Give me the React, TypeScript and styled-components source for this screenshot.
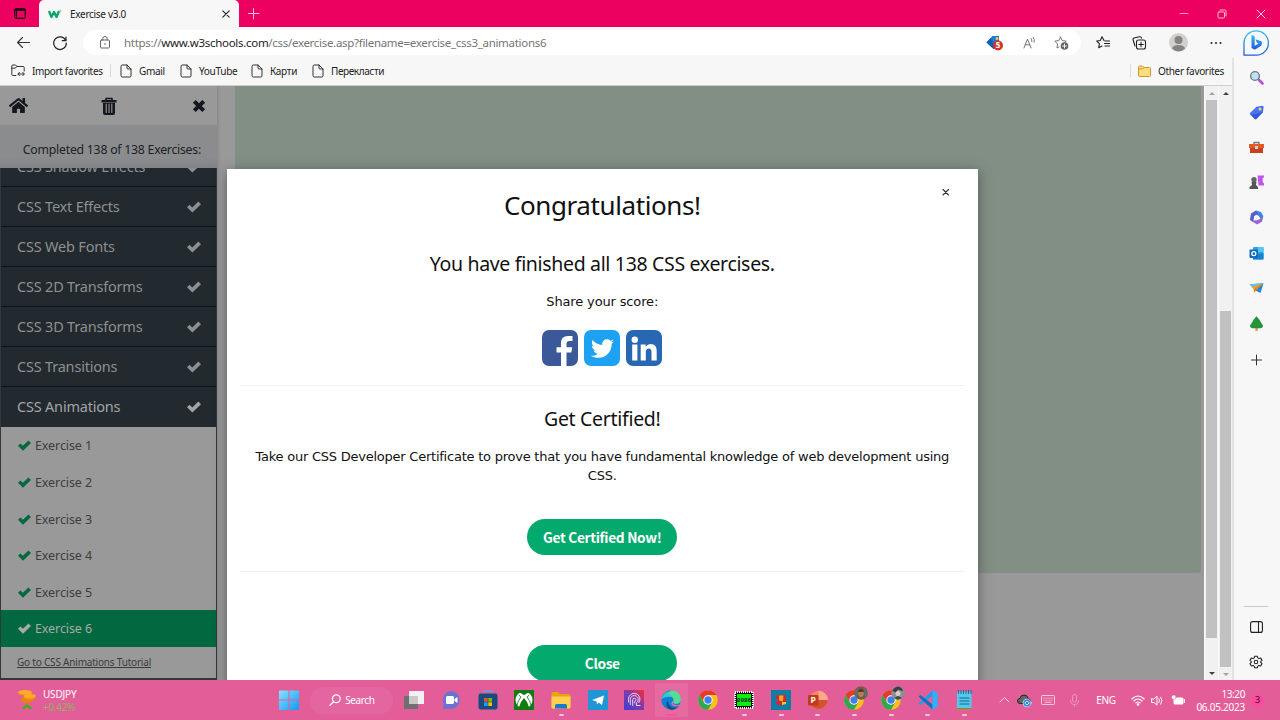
import React from 'react';
import styled, { createGlobalStyle, css } from 'styled-components';
import { FaHome, FaTwitter } from 'react-icons/fa';

const Global = createGlobalStyle`
  * { box-sizing: border-box; }
  body { margin: 0; overflow: hidden; font-family: "Noto Sans", "Open Sans", sans-serif; }
  svg { display: block; flex: none; overflow: visible; }
`;

/* ---------- shared ---------- */
const Text = styled.span<{ $size: number; $ls?: number; $color?: string; $w?: number }>`
  font-size: ${p => p.$size}px;
  letter-spacing: ${p => p.$ls ?? 0}px;
  color: ${p => p.$color ?? '#222'};
  font-weight: ${p => p.$w ?? 400};
  white-space: nowrap;
  line-height: 1.2;
`;

const Svg = ({ w, h = w, box, children }: { w: number; h?: number; box?: string; children: React.ReactNode }) => (
  <svg width={w} height={h} viewBox={box ?? `0 0 ${w} ${h}`} fill="none" strokeLinecap="round" strokeLinejoin="round">
    {children}
  </svg>
);

const Check = ({ size }: { size: number }) => (
  <Svg w={size} h={size} box="0 0 14 14">
    <path d="M0 7.300 2.500 4.800 5.300 7.400 11.300 1.600 14 4.200 5.400 12.600Z" fill="currentColor" />
  </Svg>
);

const Screen = styled.div`
  width: 1280px;
  height: 720px;
  display: flex;
  flex-direction: column;
  overflow: hidden;
  background: #f7f7f7;
`;

/* ---------- title bar ---------- */
const TitleBar = styled.header`
  height: 27px;
  flex: none;
  display: flex;
  align-items: center;
  background: #ec0060;
`;
const TabActions = styled.div`
  width: 39px;
  display: flex;
  justify-content: center;
  padding-left: 1px;
`;
const Tab = styled.div`
  width: 200px;
  height: 27px;
  padding: 0 9px 0 10px;
  display: flex;
  align-items: center;
  background: #f7f7f7;
  border-radius: 5px 5px 0 0;
`;
const TabTitle = styled(Text)`
  flex: 1;
  margin-left: 7px;
`;
const NewTab = styled.div`
  margin-left: 9px;
`;
const Controls = styled.div`
  margin-left: auto;
  width: 115px;
  display: flex;
  justify-content: space-around;
  align-items: center;
`;

/* ---------- toolbar ---------- */
const Toolbar = styled.div`
  height: 31px;
  flex: none;
  display: flex;
  align-items: center;
  padding-left: 16px;
`;
const Reload = styled.div`
  margin: 0 16px 0 23px;
`;
const Address = styled.div`
  width: 998px;
  height: 25px;
  display: flex;
  align-items: center;
  padding: 0 11px 0 16px;
  background: #fff;
  border-radius: 13px;
`;
const Url = styled(Text)`
  flex: 1;
  margin-left: 13px;
  b { font-weight: 400; color: #1b1b1b; }
`;
const AddressIcons = styled.div`
  display: flex;
  align-items: center;
  gap: 18px;
`;
const ToolbarIcons = styled.div`
  flex: 1;
  display: flex;
  align-items: center;
  padding-left: 15px;
  gap: 22.3px;
`;

/* ---------- body ---------- */
const Body = styled.div`
  height: 622px;
  flex: none;
  display: flex;
`;
const Main = styled.main`
  width: 1232px;
  display: flex;
  flex-direction: column;
`;
const Favorites = styled.nav`
  height: 28px;
  flex: none;
  display: flex;
  align-items: center;
  padding: 0 8px 2px 11px;
  border-bottom: 1px solid #cfcfcf;
`;
const Favorite = styled.div<{ $width: number }>`
  width: ${p => p.$width}px;
  display: flex;
  align-items: center;
  gap: 7px;
`;
const Rule = styled.i<{ $left: number; $right: number }>`
  width: 1px;
  height: 13px;
  margin: 0 ${p => p.$right}px 0 ${p => p.$left}px;
  background: #d9d9d9;
`;

const WebView = styled.section`
  position: relative;
  flex: 1;
  min-height: 0;
  display: flex;
  overflow: hidden;
  background: #999;
`;
const Menu = styled.aside`
  width: 217px;
  flex: none;
  display: flex;
  flex-direction: column;
  box-shadow: 1px 0 3px rgba(0, 0, 0, 0.15);
`;
const MenuTools = styled.div`
  height: 39px;
  flex: none;
  display: flex;
  align-items: center;
  justify-content: space-between;
  padding: 0 11px 0 9px;
  color: #14171d;
`;
const Progress = styled.div`
  height: 43px;
  flex: none;
  display: flex;
  justify-content: flex-end;
  padding: 18px 16px 0 0;
  background: linear-gradient(#8b8c8e 75%, #818387);
`;
const Lessons = styled.div`
  display: flex;
  flex-direction: column;
  flex: 1;
  min-height: 0;
  overflow: hidden;
  justify-content: flex-end;
  border: solid #31393c;
  border-width: 0 1px 2px 1px;
`;
const Lesson = styled.div<{ $open?: boolean }>`
  height: 40px;
  flex: none;
  display: flex;
  align-items: center;
  justify-content: space-between;
  padding: 0 15px 0 16px;
  background: #22292f;
  border-bottom: ${p => (p.$open ? 0 : 1)}px solid #101417;
  color: ${p => (p.$open ? '#a3a5a6' : '#8d9091')};
`;
const Exercise = styled.div<{ $active?: boolean }>`
  height: 36.6px;
  flex: none;
  display: flex;
  align-items: center;
  gap: 4px;
  padding: 1px 0 0 17px;
  color: #02683f;
  background: #999;
  ${p => p.$active && css`
    background: #02683f;
    color: #a9aaa9;
  `}
`;
const Tutorial = styled.div`
  height: 31.4px;
  flex: none;
  padding: 7px 0 0 16px;
  background: #999;
  line-height: 12px;
  span { text-decoration: underline; }
`;

const Content = styled.div`
  flex: 1;
  padding: 0 3.5px 0 18px;
`;
const CodeArea = styled.div`
  height: 487px;
  background: #828f85;
  border-radius: 0 0 3px 3px;
`;

const ScrollTrack = styled.div`
  width: 14px;
  flex: none;
  display: flex;
  flex-direction: column;
  align-items: center;
  background: #f1f1f1;
  border-left: 1px solid #fafafa;
`;
const Arrow = styled.i<{ $down?: boolean; $dim?: boolean }>`
  height: 14px;
  flex: none;
  display: flex;
  align-items: center;
  padding-top: 1px;
  &::before {
    content: '';
    border: 3px solid transparent;
    ${p => (p.$down ? 'border-bottom-width: 0; border-top-color' : 'border-top-width: 0; border-bottom-color')}: ${p => (p.$dim ? '#a3a3a3' : '#404040')};
  }
`;
const Track = styled.div<{ $offset: number }>`
  flex: 1;
  padding-top: ${p => p.$offset}px;
`;
const Thumb = styled.div<{ $height: number }>`
  width: 11px;
  height: ${p => p.$height}px;
  background: #c1c1c1;
`;

/* ---------- dialog ---------- */
const Dialog = styled.div`
  position: absolute;
  left: 227px;
  top: 83px;
  width: 750.5px;
  height: 560px;
  padding: 0 13px;
  background: #fff;
  display: flex;
  flex-direction: column;
  align-items: center;
  box-shadow: 0 3px 8px rgba(0, 0, 0, 0.2), 0 2px 15px rgba(0, 0, 0, 0.22);
`;
const CloseX = styled.div`
  position: absolute;
  left: 714px;
  top: 19px;
`;
const Line = styled(Text)<{ $h: number; $top: number; $verdana?: boolean }>`
  height: ${p => p.$h}px;
  line-height: ${p => p.$h}px;
  margin-top: ${p => p.$top}px;
  color: #111;
  ${p => p.$verdana && css`font-family: "DejaVu Sans", sans-serif;`}
`;
const Share = styled.div`
  display: flex;
  gap: 6px;
  margin-top: 18px;
`;
const ShareButton = styled.div<{ $bg: string }>`
  width: 36px;
  height: 36px;
  display: flex;
  align-items: center;
  justify-content: center;
  border-radius: 7px;
  background: ${p => p.$bg};
  color: #fff;
`;
const Divider = styled.div<{ $top: number }>`
  width: 724px;
  height: 1px;
  flex: none;
  margin-top: ${p => p.$top}px;
  background: #f0f0f0;
`;
const Pill = styled.div<{ $top: number }>`
  width: 150px;
  height: 36px;
  flex: none;
  margin-top: ${p => p.$top}px;
  display: flex;
  align-items: center;
  justify-content: center;
  border-radius: 18px;
  background: #04aa6d;
  color: #fff;
  letter-spacing: -0.3px;
  font: 700 13.7px/36px "Noto Sans CJK SC", sans-serif;
`;

/* ---------- edge sidebar ---------- */
const Side = styled.aside`
  width: 48px;
  display: flex;
  flex-direction: column;
  align-items: center;
  padding: 2px 1.5px 0 0;
  border-left: 2px solid #e3e3e3;
  background: #f7f7f7;
`;
const SideSlot = styled.div`
  height: 35.1px;
  flex: none;
  display: flex;
  align-items: center;
`;
const SideRule = styled.div`
  width: 24px;
  height: 1px;
  margin: auto 0 3px;
  background: #c9c9c9;
`;

/* ---------- taskbar ---------- */
const Taskbar = styled.footer`
  height: 40px;
  flex: none;
  display: flex;
  align-items: center;
  background: #e35e99;
`;
const Widget = styled.div`
  width: 270.5px;
  display: flex;
  align-items: center;
  padding-left: 17px;
  gap: 7px;
`;
const Stack = styled.div<{ $end?: boolean }>`
  display: flex;
  flex-direction: column;
  align-items: ${p => (p.$end ? 'flex-end' : 'flex-start')};
  gap: 1px;
`;
const AppButton = styled.div<{ $running?: boolean; $active?: boolean }>`
  width: 36.67px;
  height: 40px;
  flex: none;
  display: flex;
  flex-direction: column;
  align-items: center;
  padding-top: 10px;
  gap: 4px;
  ${p => p.$active && css`
    background: linear-gradient(#e56aa0, #e56aa0) center / 33px 34px no-repeat;
  `}
  &::after {
    content: '';
    width: ${p => (p.$active ? 12 : 5)}px;
    height: 2px;
    border-radius: 1px;
    background: ${p => (p.$active ? '#ff4f9e' : p.$running ? '#f4c6da' : 'transparent')};
  }
`;
const SearchBox = styled.div`
  width: 83px;
  height: 27px;
  margin: 0 3px;
  display: flex;
  align-items: center;
  padding-left: 19px;
  gap: 4px;
  border-radius: 14px;
  background: #e466a0;
`;
const Tray = styled.div`
  margin-left: auto;
  padding-right: 16px;
  display: flex;
  align-items: center;
`;
const TrayItem = styled.div<{ $width: number; $end?: boolean }>`
  width: ${p => p.$width}px;
  display: flex;
  align-items: center;
  justify-content: ${p => (p.$end ? 'flex-end' : 'center')};
`;
const Notice = styled.div`
  width: 13px;
  height: 13px;
  margin-left: 6px;
  display: flex;
  align-items: center;
  justify-content: center;
  border-radius: 50%;
  background: #ff4aa0;
`;

const PageIcon = () => (
  <Svg w={12} h={14}>
    <path d="M1 2.2Q1 1 2.2 1H7L11 5v6.8Q11 13 9.800 13H2.200Q1 13 1 11.800ZM7 1v3Q7 5 8 5h3" stroke="#333" />
  </Svg>
);

const Chrome = () => (
  <>
    <circle cx="10" cy="10" r="9.800" fill="#fbc116" />
    <path d="M1.500 5.100A9.800 9.800 0 0 1 18.500 5.100H10L5.800 12.400Z" fill="#e33b2e" />
    <path d="M1.500 5.100A9.800 9.800 0 0 0 10 19.800L14.200 12.400 5.800 12.400Z" fill="#2da94f" />
    <circle cx="10" cy="10" r="4.700" fill="#fff" />
    <circle cx="10" cy="10" r="3.700" fill="#3f80ea" />
  </>
);

const lessons = ['CSS Shadow Effects', 'CSS Text Effects', 'CSS Web Fonts', 'CSS 2D Transforms', 'CSS 3D Transforms', 'CSS Transitions', 'CSS Animations'];

const sideIcons: React.ReactNode[] = [
  <><path d="m10 10 3.500 3.500" stroke="#b54be0" strokeWidth="2.600" /><circle cx="6" cy="6" r="4.400" fill="#b9e2f5" stroke="#75797d" strokeWidth="1.400" /></>,
  <><path d="M1 8 7.500 1.800 13.500.800Q14.600.800 14.600 2L14 7.200 7.300 14Q6.600 14.600 5.900 14L1 9.300Q.400 8.700 1 8Z" fill="#4775f5" /><path d="m2 10 5-1 7-2-6.700 7q-.700.600-1.400 0Z" fill="#3a55d8" /><circle cx="11" cy="4" r="1.500" fill="#ffd34d" /></>,
  <><path d="M5 4V2.500h5V4" stroke="#777" strokeWidth="1.400" /><path d="M1 4h13v9H1Z" fill="#c9401a" /><path d="M0 4h15v4H0Z" fill="#e25a28" /><path d="M6 6h3v3H6Z" fill="#ccd2d4" /></>,
  <><path d="M8.500.500h6.500v1.800l-1.300.700v4l1.300 1.500v2H9.500Z" fill="#bf55ef" /><circle cx="5" cy="4.700" r="2.700" fill="#666" /><path d="M2.500 7h5L7 10l2 2v2H.500v-2L3 10Z" fill="#555" /></>,
  <><path d="M7 .600 12 2l2.300 4-1.500 4.500L10 6.500 5 4Z" fill="#3d86e0" /><path d="M7 .600 2 3.500.900 10l3.500 2L5 6.500l4-2Z" fill="#5b5fcb" /><path d="M2.500 11 8 14.500l5-2.700L14.300 6.500 10 9.500Z" fill="#9b67d5" /><path d="M7.500 4.800 10 6.200v2.900L7.500 10.500 5 9.100V6.200Z" fill="#f7f7f7" /></>,
  <><rect x="4" y="1" width="10.500" height="12.500" rx="1" fill="#2ba5e8" /><path d="M9 1h5.500v5H9Z" fill="#55c3f3" /><path d="m4 9 10.500-2v6.500H4Z" fill="#1683cf" /><rect x=".500" y="3.500" width="8.500" height="8.500" rx="1" fill="#0f6cbd" /><circle cx="4.800" cy="7.700" r="2" stroke="#fff" strokeWidth="1.300" /></>,
  <><path d="M.500 3.200 14.500 2.200 11.500 12 7.500 10Z" fill="#2489dc" /><path d="m.500 3.200 14-1L4.500 7Z" fill="#5cc4f5" /><path d="M2.500 6 14.500 2.200 5.500 8.700Z" fill="#f3a128" /><path d="M4.500 8 14.500 2.200 7 9.500 5.200 11.800Z" fill="#e08a1c" /></>,
  <><path d="M6.400 11h2.400v3.800H6.400Z" fill="#f2912c" /><path d="M7.500.300Q11 4 12 6.500L14 9.500Q14 12.300 11 12.300H4Q1 12.300 1 9.500L3 6.500Q4 4 7.500.300Z" fill="#279339" /></>,
  <path d="M2.500 9h10M7.500 4v10" stroke="#333" />,
];

const dockIcons: { running?: boolean; active?: boolean; art: React.ReactNode }[] = [
  { art: <><rect x="0" y="6" width="14" height="13" fill="#6f6f6f" /><rect x="5" y="1" width="15" height="13" fill="#f2f2f2" /><path d="M5 6h9v8H5Z" fill="#c9c9c9" /></> },
  { art: <><path d="M10.500 1A9 9 0 1 1 8 18.800L1.500 19 3 14.500A9 9 0 0 1 10.500 1Z" fill="#6a72d2" /><rect x="5" y="6" width="8" height="8" rx="1.500" fill="#fff" /><path d="m13.500 9 3-2v6l-3-2Z" fill="#fff" /></> },
  { art: <><path d="M6 4V1h8v3" stroke="#38b6ea" /><rect x=".500" y="3.500" width="19" height="16" rx="2" fill="#1b4b7e" /><path d="M6 8h3.700v3.700H6Z" fill="#f05023" /><path d="M10.300 8H14v3.700h-3.700Z" fill="#80bb03" /><path d="M6 12.300h3.700V16H6Z" fill="#05a6f0" /><path d="M10.300 12.300H14V16h-3.700Z" fill="#ffb902" /></> },
  { art: <><rect width="20" height="20" rx=".5" fill="#107c10" /><circle cx="10" cy="10" r="8.500" fill="#fff" /><path d="M4.600 2.600Q7 2.800 10 5.200 13 2.800 15.400 2.600L13.500.5h-7Z" fill="#107c10" /><path d="M10 8Q14 12 15.200 17.500L10 19.500 4.800 17.500Q6 12 10 8Z" fill="#107c10" /><path d="M3 15Q4 10.500 7 7L5 5.200M17 15Q16 10.500 13 7L15 5.200" stroke="#107c10" strokeWidth=".8" /></> },
  { running: true, art: <><path d="M.500 3.500q0-1.500 1.500-1.500h5l2 2h9q1.500 0 1.500 1.500V17q0 1.500-1.500 1.500H2Q.500 18.500.500 17Z" fill="#e8a30e" /><path d="M.500 6.500h19V17q0 1.500-1.500 1.500H2Q.500 18.500.500 17Z" fill="#ffd04f" /><path d="M4 18.500v-3q0-1.500 1.500-1.500h9q1.500 0 1.500 1.500v3Z" fill="#1b78d0" /></> },
  { art: <><rect width="20" height="20" fill="#2196d6" /><path d="m4 10 12-4.500L14 15l-3.500-2.500L9 14.500l-.500-3Z" fill="#fff" /></> },
  { art: <><defs><linearGradient id="pr" x1="0" y1="1" x2="1" y2="0"><stop offset="0" stopColor="#3b3fd0" /><stop offset=".500" stopColor="#7b3bb0" /><stop offset="1" stopColor="#ff2a2a" /></linearGradient></defs><rect width="20" height="20" fill="url(#pr)" /><path d="M8.700 15.500V9.700a1.600 1.600 0 1 1 2 1.600v1.500M6.300 14.500V9.500a4 4 0 1 1 6 3.500v2.500H16M4.500 12V9.500a5.800 5.800 0 1 1 10.500 3" stroke="#e6d4fa" strokeWidth="1" /></> },
  { active: true, art: <><circle cx="10" cy="10" r="9.700" fill="#1180d3" /><path d="M.500 9.500A9.700 9.700 0 0 1 19.700 9q.300 4.500-4.700 4.800-3.500-.300-2.500-2.300Q13 7 8.500 6.800 3 6.700.500 9.500Z" fill="#35c5d5" /><path d="M10 .300q9.700.700 9.700 9.200 0 4-4.700 4.300-3-.300-2.500-2.300Q14 6 7 4Z" fill="#56dd91" /><path d="M7 10q-.500 5 4 7.500 4 1 7-2-3 5-9 4-6-3-2-9.500Z" fill="#114a8b" /><path d="M12.500 11.500Q11 13 13 14.500q3 1.500 6 0l-1 1.200q-5 2-7.500-1.200-.500-2 1-3.500Z" fill="#e56aa0" /></> },
  { art: <Chrome /> },
  { running: true, art: <><rect x="1" y="2" width="18" height="16" fill="#0d0d0d" stroke="#fff" strokeWidth="2" strokeDasharray="1 1" strokeLinecap="butt" /><rect x="3" y="4" width="14" height="12" fill="#0cef0c" /><text x="10" y="12.300" fontSize="6" fontWeight="700" fontFamily="Liberation Mono" fill="#022" textAnchor="middle">8086</text></> },
  { running: true, art: <><rect width="20" height="20" fill="#0d7fa5" /><path d="M5 5.500 11 4.500l4 1v8l-5 2-5-1.500Z" fill="#d6262b" /><path d="M8 5.500h4.500l-.5 6-4-1Z" fill="#f6a822" /><path d="M11 12h4v2l-4 1Z" fill="#f0c62a" /><path d="M4.500 9h2.500v3H4.500Z" fill="#6750c0" /></> },
  { running: true, art: <><circle cx="10.500" cy="10" r="9.300" fill="#ee8762" /><path d="M10.500 10h9.300a9.300 9.300 0 0 1-18 3Z" fill="#d35230" /><path d="M10.500.700a9.300 9.300 0 0 1 9.300 9.300h-9.300Z" fill="#ffa98b" /><rect x="0" y="5" width="10.500" height="10.500" rx="1" fill="#c13b1b" /><text x="5.200" y="13.300" fontSize="8.500" fontWeight="700" fontFamily="Open Sans" fill="#fff" textAnchor="middle">P</text></> },
  { running: true, art: <><Chrome /><circle cx="17" cy="3" r="6.800" fill="#7b5a44" /><path d="M11.500 6q-1-6 2.500-8l-1 9ZM22.500 6q1-6-2.500-8l1 9Z" fill="#4e7a74" /><ellipse cx="17" cy="3" rx="2.800" ry="4" fill="#b0805c" /><path d="M14 1q3-5 6 0l-.5 1h-5Z" fill="#5a3a28" /></> },
  { running: true, art: <><Chrome /><circle cx="17" cy="3" r="6.800" fill="#8b8f96" /><path d="M11.500 1q1-4 6-4.500 4 1 4.500 4.500l-2-.5-3-1-2 3Z" fill="#3c3d44" /><circle cx="17" cy="3.500" r="2.500" fill="#dccdc4" /><path d="m13 8 4-2 4 2-4 1.700Z" fill="#444750" /></> },
  { running: true, art: <><path d="M14.500.500 19.500 3v14l-5 2.500V5.500L2.500 15 .500 13.500Z" fill="#1f9cf0" /><path d="M.500 6.500 2.500 5l12 9.500v5Z" fill="#0b71c1" /><path d="M14.500.500 19.500 3v14l-5 2.500Z" fill="#35aef5" /></> },
  { running: true, art: <><rect x="3" y="1.500" width="14.500" height="18" rx="1" fill="#54c8e8" /><path d="M3 18h14.500v1.500H3Z" fill="#b07a22" /><path d="M4.500.500v3M7 .500v3M9.500.500v3M12 .500v3M14.500.500v3M17 .500v3" stroke="#14679c" /><path d="M6 8h9M6 11h9M6 14h9" stroke="#12688f" strokeWidth="1.200" /></> },
];

export default function App() {
  return (
    <Screen>
      <Global />
      <TitleBar>
        <TabActions>
          <Svg w={12} h={11}><rect x=".7" y=".7" width="10.600" height="9.600" rx="1.500" stroke="#2a0716" strokeWidth="1.300" /><path d="M1 2h10" stroke="#2a0716" strokeWidth="2" /><path d="M2.500 3v7" stroke="#2a0716" strokeWidth="1.200" /></Svg>
        </TabActions>
        <Tab>
          <Svg w={14} h={10}><path d="m0 2 2.500 6L5 3l2.500 5L10 2" stroke="#04a56b" strokeWidth="2.300" strokeLinecap="butt" /><path d="M10.800 1h1.300l-.8 1 .8 1h-1.200" stroke="#7cc9a8" strokeWidth=".7" /></Svg>
          <TabTitle $size={10} $ls={-0.3}>Exercise v3.0</TabTitle>
          <Svg w={8}><path d="m.8.8 6.400 6.400M7.200.8.8 7.200" stroke="#222" strokeWidth="1.100" /></Svg>
        </Tab>
        <NewTab><Svg w={12}><path d="M.500 5.500h10.500M5.500 .500v10.500" stroke="#ffc2dc" /></Svg></NewTab>
        <Controls>
          <Svg w={10}><path d="M1 4.500h8" stroke="#ff9ac4" /></Svg>
          <Svg w={10}><rect x="1" y="3" width="6.500" height="6" rx="1" stroke="#ffb5d3" /><path d="M3 1h5q1 0 1 1v5" stroke="#ffb5d3" /></Svg>
          <Svg w={10}><path d="m1 1 8 8M9 1 1 9" stroke="#ffd0e3" /></Svg>
        </Controls>
      </TitleBar>

      <Toolbar>
        <Svg w={14} h={12}><path d="M13.5 5.500H1.500M6.500 .5 1.500 5.500l5 5" stroke="#333" strokeWidth="1.100" /></Svg>
        <Reload><Svg w={14}><path d="M12.700 4.500A6.300 6.300 0 1 0 13.300 7M13 1v3.700H9.300" stroke="#222" strokeWidth="1.200" /></Svg></Reload>
        <Address>
          <Svg w={12} h={13}><rect x="1.500" y="4" width="9" height="8" rx="1" stroke="#666" /><path d="M3.800 4V2.500Q3.800.5 6 .5t2.200 2v1.500" stroke="#666" /><circle cx="6" cy="8" r=".8" fill="#666" /></Svg>
          <Url $size={11.5} $ls={-0.3} $color="#757575">https://<b>www.w3schools.com</b>/css/exercise.asp?filename=exercise_css3_animations6</Url>
          <AddressIcons>
            <Svg w={17} h={16}><path d="m.500 7.500 6-6.500H13v8L7.500 14Z" fill="#1a7bd0" /><path d="m.500 7.500 4-4.500 5 9-2 2Z" fill="#0f5fb4" /><circle cx="11" cy="3.500" r="1.500" fill="#ffc83d" /><circle cx="12" cy="10.500" r="5" fill="#d93025" /><text x="12" y="13.300" fontSize="8" fontWeight="700" fontFamily="Open Sans" fill="#fff" textAnchor="middle">5</text></Svg>
            <Svg w={15} h={12}><path d="M3 11 6.500 2 10 11M4.300 7.800h4.400M10 1.500q1.300 1.300.8 3M12.200.300q1.800 2.200.9 5" stroke="#777" /></Svg>
            <Svg w={16} h={14}><path d="m6.500 1 1.700 3.600 4 .500-1.500 1.400M5 11l-2 1 .600-4L.800 5.100l4-.500L6.500 1" stroke="#777" /><circle cx="10.500" cy="10" r="3.800" fill="#636363" /><path d="M8.500 10h4M10.500 8v4" stroke="#fff" strokeWidth=".9" /></Svg>
          </AddressIcons>
        </Address>
        <ToolbarIcons>
          <Svg w={14} h={13}><path d="M8 4.500 6 .800 4.300 4.500.700 5l2.700 2.700-.700 4L6 10M9 5h4.500M8.500 7.500h5M9 10h4.500" stroke="#222" strokeWidth="1.100" /></Svg>
          <Svg w={14} h={14}><path d="M3 10 1 3.500Q.800 2.500 2 2L7.500.800Q9 .500 9.500 2" stroke="#222" strokeWidth="1.100" /><rect x="4.500" y="4" width="9" height="9" rx="2" stroke="#222" strokeWidth="1.100" /><path d="M9 6.200v4.600M6.700 8.500h4.600" stroke="#222" strokeWidth="1.100" /></Svg>
          <Svg w={19}><circle cx="9.500" cy="9.500" r="9.500" fill="#d2d0ce" /><circle cx="9.500" cy="7" r="4" fill="#858280" /><path d="M3 15.500Q4 12 9.500 12t6.500 3.500a9 9 0 0 1-13 0Z" fill="#858280" /></Svg>
          <Svg w={12} h={4}><circle cx="1.500" cy="2" r="1" fill="#222" /><circle cx="6" cy="2" r="1" fill="#222" /><circle cx="10.500" cy="2" r="1" fill="#222" /></Svg>
          <Svg w={26}><defs><linearGradient id="bing" x1="0" y1="0" x2="0" y2="1"><stop offset="0" stopColor="#38b9ee" /><stop offset="1" stopColor="#2558d8" /></linearGradient></defs><path d="M0 13A12.200 12.200 0 1 1 12.200 25.200H0Z" fill="#f4faff" stroke="url(#bing)" strokeWidth="1.300" /><path d="m7.500 5 3.200 1.200v9.500l4-2.300-2-1-1.200-3.200 5.700 2q1.500 1.500 0 4.500l-6.500 4-3.200-1.700Z" fill="url(#bing)" /></Svg>
        </ToolbarIcons>
      </Toolbar>

      <Body>
        <Main>
          <Favorites>
            <Favorite $width={98}>
              <Svg w={14} h={13}><path d="M5 11.500H1.800Q.800 11.500.800 10.500V2Q.800 1 1.800 1H4.500L6 2.500h6.200q1 0 1 1V7M.800 4.200H4L6 2.500M7 10h6M8.500 8.300 7 10l1.500 1.700M11.700 8.300 13.300 10l-1.600 1.700" stroke="#333" /></Svg>
              <Text $size={10} $ls={-0.35}>Import favorites</Text>
            </Favorite>
            <Rule $left={1} $right={9} />
            <Favorite $width={60}><PageIcon /><Text $size={10} $ls={-0.3}>Gmail</Text></Favorite>
            <Favorite $width={71}><PageIcon /><Text $size={10} $ls={-0.3}>YouTube</Text></Favorite>
            <Favorite $width={61}><PageIcon /><Text $size={10} $ls={-0.3}>Карти</Text></Favorite>
            <Favorite $width={80}><PageIcon /><Text $size={10} $ls={-0.4}>Перекласти</Text></Favorite>
            <Rule $left={738} $right={7} />
            <Favorite $width={86}>
              <Svg w={13} h={12}><path d="M.500 2Q.500 1 1.500 1h3L6 2.500h5.500q1 0 1 1V10.500q0 1-1 1h-10q-1 0-1-1Z" fill="#ffdc7c" stroke="#c9982c" /><path d="M.500 4H4.500L6 2.500" stroke="#c9982c" /></Svg>
              <Text $size={10} $ls={-0.33}>Other favorites</Text>
            </Favorite>
          </Favorites>

          <WebView>
            <Menu>
              <MenuTools>
                <FaHome size={19} />
                <Svg w={19} h={18}><path d="M5 3V1.500h6V3" stroke="#14171d" strokeWidth="1.600" /><path d="M.500 3h15v2.500H.500ZM2 6h12v10q0 2-2 2H4q-2 0-2-2Z" fill="#14171d" /><path d="M5.200 7v8.500M8 7v8.500M10.800 7v8.500" stroke="#999" strokeWidth="1.100" /></Svg>
                <Svg w={14}><path d="m2.300 2.300 9.400 9.400M11.700 2.300 2.300 11.700" stroke="#14171d" strokeWidth="4" strokeLinecap="butt" /></Svg>
              </MenuTools>
              <Progress><Text $size={12.3} $ls={-0.25} $color="#1c1f24">Completed 138 of 138 Exercises:</Text></Progress>
              <Lessons>
                {lessons.map((l, i) => (
                  <Lesson key={l} $open={i === 6}>
                    <Text $size={14.5} $ls={-0.2} $color="inherit">{l}</Text>
                    <Check size={14} />
                  </Lesson>
                ))}
                {[1, 2, 3, 4, 5, 6].map(n => (
                  <Exercise key={n} $active={n === 6}>
                    <Check size={13} />
                    <Text $size={12.5} $ls={-0.1} $color={n === 6 ? '#a9aaa9' : '#3d3d3d'}>Exercise {n}</Text>
                  </Exercise>
                ))}
                <Tutorial><Text $size={10} $ls={-0.2} $color="#3a3a3a">Go to CSS Animations Tutorial</Text></Tutorial>
              </Lessons>
            </Menu>
            <Content><CodeArea /></Content>
            <ScrollTrack><Arrow $dim /><Track $offset={0}><Thumb $height={538} /></Track><Arrow $down /></ScrollTrack>
            <ScrollTrack><Arrow /><Track $offset={211}><Thumb $height={356} /></Track><Arrow $down $dim /></ScrollTrack>

            <Dialog>
              <CloseX><Svg w={9}><path d="m2 1.500 5.500 5.500M7.500 1.500 2 7" stroke="#333" strokeWidth="1.100" /></Svg></CloseX>
              <Line $size={26} $ls={-0.4} $h={36} $top={18}>Congratulations!</Line>
              <Line $size={19.500} $ls={-0.33} $h={28} $top={27}>You have finished all 138 CSS exercises.</Line>
              <Line $size={13} $ls={-0.15} $h={20} $top={14} $verdana>Share your score:</Line>
              <Share>
                <ShareButton $bg="#3b5998">
                  <Svg w={36}><path d="M19 36V22.500h-4.500v-5.300H19V13q0-7 7-7h4.500v5H27.500q-3 0-3 2.800v3.400h5.700l-.800 5.300h-4.900V36Z" fill="#fff" /></Svg>
                </ShareButton>
                <ShareButton $bg="#1da1f2"><FaTwitter size={23} /></ShareButton>
                <ShareButton $bg="#2867b2">
                  <Svg w={36}><circle cx="8.800" cy="9.800" r="3.200" fill="#fff" /><path d="M6.200 14.500h5.200V30.500H6.200ZM14.700 14.500h5v2.200q1.600-2.600 5-2.600 6 0 6 7v9.400h-5.200V22q0-3.600-2.700-3.600-3 0-3 3.800v8.300h-5.100Z" fill="#fff" /></Svg>
                </ShareButton>
              </Share>
              <Divider $top={19} />
              <Line $size={19.500} $ls={-0.3} $h={28} $top={19}>Get Certified!</Line>
              <Line $size={13} $ls={-0.235} $h={19} $top={14} $verdana>Take our CSS Developer Certificate to prove that you have fundamental knowledge of web development using</Line>
              <Line $size={13} $ls={-0.2} $h={19} $top={0} $verdana>CSS.</Line>
              <Pill $top={33.5}>Get Certified Now!</Pill>
              <Divider $top={16.5} />
              <Pill $top={72.5}>Close</Pill>
            </Dialog>
          </WebView>
        </Main>

        <Side>
          {sideIcons.map((art, i) => <SideSlot key={i}><Svg w={15}>{art}</Svg></SideSlot>)}
          <SideRule />
          <SideSlot><Svg w={13} h={12}><rect x=".6" y=".6" width="11.800" height="10.800" rx="2" stroke="#222" strokeWidth="1.100" /><path d="M8.500 1v10" stroke="#222" strokeWidth="1.100" /></Svg></SideSlot>
          <SideSlot><Svg w={14} box="0 0 24 24"><path d="M9.700 2h4.600l.7 3 2 1.200 3-1 2.300 4L20 11.300v1.500l2.300 2-2.300 4-3-1L15 19l-.7 3H9.700L9 19l-2-1.200-3 1-2.300-4L4 12.700v-1.500l-2.300-2 2.300-4 3 1L9 5Z" stroke="#222" strokeWidth="1.800" /><circle cx="12" cy="12" r="3" stroke="#222" strokeWidth="1.800" /></Svg></SideSlot>
        </Side>
      </Body>

      <Taskbar>
        <Widget>
          <Svg w={19} h={22}><ellipse cx="10" cy="11" rx="6.500" ry="3" fill="#e8820f" /><ellipse cx="8" cy="4" rx="7" ry="3" fill="#e8820f" /><ellipse cx="12.500" cy="8" rx="6" ry="3" fill="#ef8f15" /><ellipse cx="12.800" cy="7" rx="6" ry="2.300" fill="#ffa826" /><ellipse cx="8" cy="3.300" rx="7" ry="2.300" fill="#ffab2b" /><path d="m6.500 19 3.500-2.500 3.500 2.500" stroke="#37b60f" strokeWidth="2.200" /></Svg>
          <Stack>
            <Text $size={10} $ls={-0.2} $color="#fff">USDJPY</Text>
            <Text $size={10} $ls={-0.3} $color="#93b35c">+0.42%</Text>
          </Stack>
        </Widget>
        <AppButton><Svg w={20}><defs><linearGradient id="win" x1="0" y1="0" x2="1" y2="1"><stop offset="0" stopColor="#82e4ff" /><stop offset="1" stopColor="#1597f5" /></linearGradient></defs><path d="M0 .500h9.500v9H0ZM10.500.500H20v9h-9.500ZM0 10.500h9.500v9.500H0ZM10.500 10.500H20V20h-9.500Z" fill="url(#win)" /></Svg></AppButton>
        <SearchBox>
          <Svg w={12}><circle cx="7.300" cy="4.800" r="3.900" stroke="#fff" strokeWidth="1.200" /><path d="M4.500 7.700 1 11.200" stroke="#fff" strokeWidth="1.400" /></Svg>
          <Text $size={10} $ls={-0.4} $color="#fff">Search</Text>
        </SearchBox>
        {dockIcons.map((d, i) => <AppButton key={i} $running={d.running} $active={d.active}><Svg w={20}>{d.art}</Svg></AppButton>)}
        <Tray>
          <TrayItem $width={18}><Svg w={11} h={8}><path d="m1 6 4.500-4.500L10 6" stroke="#fbdbe8" /></Svg></TrayItem>
          <TrayItem $width={22}><Svg w={14} h={13}><path d="M3 9.500Q.500 9.500.500 7T3 4.500Q3.500 1 7 1t4 3.500q2.500.5 2.500 2.500v2.500Z" fill="#666" stroke="#222" /><circle cx="10" cy="9" r="4" fill="#2a7fd6" stroke="#dcebfa" strokeWidth=".7" /><path d="M8 9a2 2 0 0 1 3.500-1M12 9a2 2 0 0 1-3.500 1" stroke="#fff" /></Svg></TrayItem>
          <TrayItem $width={25}><Svg w={14} h={10}><rect x=".5" y=".5" width="13" height="9" rx="1" stroke="#f9cfe0" /><path d="M2.500 3h9M2.500 5h9" stroke="#f9cfe0" strokeDasharray="1 1" strokeLinecap="butt" /><path d="M4 7.300h6" stroke="#f9cfe0" /></Svg></TrayItem>
          <TrayItem $width={28}><Svg w={9} h={13}><rect x="2.500" y=".5" width="4" height="7.500" rx="2" stroke="#ef97bd" /><path d="M.500 6.500q0 4 4 4t4-4M4.500 10.500v2" stroke="#ef97bd" /></Svg></TrayItem>
          <TrayItem $width={36}><Text $size={10} $ls={-0.3} $color="#fff">ENG</Text></TrayItem>
          <TrayItem $width={27}><Svg w={14} h={11}><path d="M.800 4q6.200-6 12.400 0M2.800 6q4.200-4 8.400 0M4.800 8q2.200-2 4.400 0" stroke="#fff" strokeWidth="1.100" /><circle cx="7" cy="9.500" r="1.200" fill="#fff" /></Svg></TrayItem>
          <TrayItem $width={11}><Svg w={12} h={11}><path d="M.600 4v3.500H3l3 2.700V1.200L3 4ZM8 3.800q1.200 1.700 0 3.700M9.800 2.200q2.400 3.300 0 7" stroke="#fff" /></Svg></TrayItem>
          <TrayItem $width={31}><Svg w={14} h={11}><rect x="2.500" y="2.500" width="10" height="7" rx="1.500" fill="#fff" /><path d="M13.500 4.500v3" stroke="#fff" /><circle cx="2.800" cy="2.300" r="2.300" fill="#fff" stroke="#e35e99" strokeWidth=".5" /></Svg></TrayItem>
          <TrayItem $width={52} $end>
            <Stack $end>
              <Text $size={10} $ls={-0.4} $color="#fff">13:20</Text>
              <Text $size={10} $ls={-0.25} $color="#fff">06.05.2023</Text>
            </Stack>
          </TrayItem>
          <Notice><Text $size={9.500} $color="#40142a">3</Text></Notice>
        </Tray>
      </Taskbar>
    </Screen>
  );
}
